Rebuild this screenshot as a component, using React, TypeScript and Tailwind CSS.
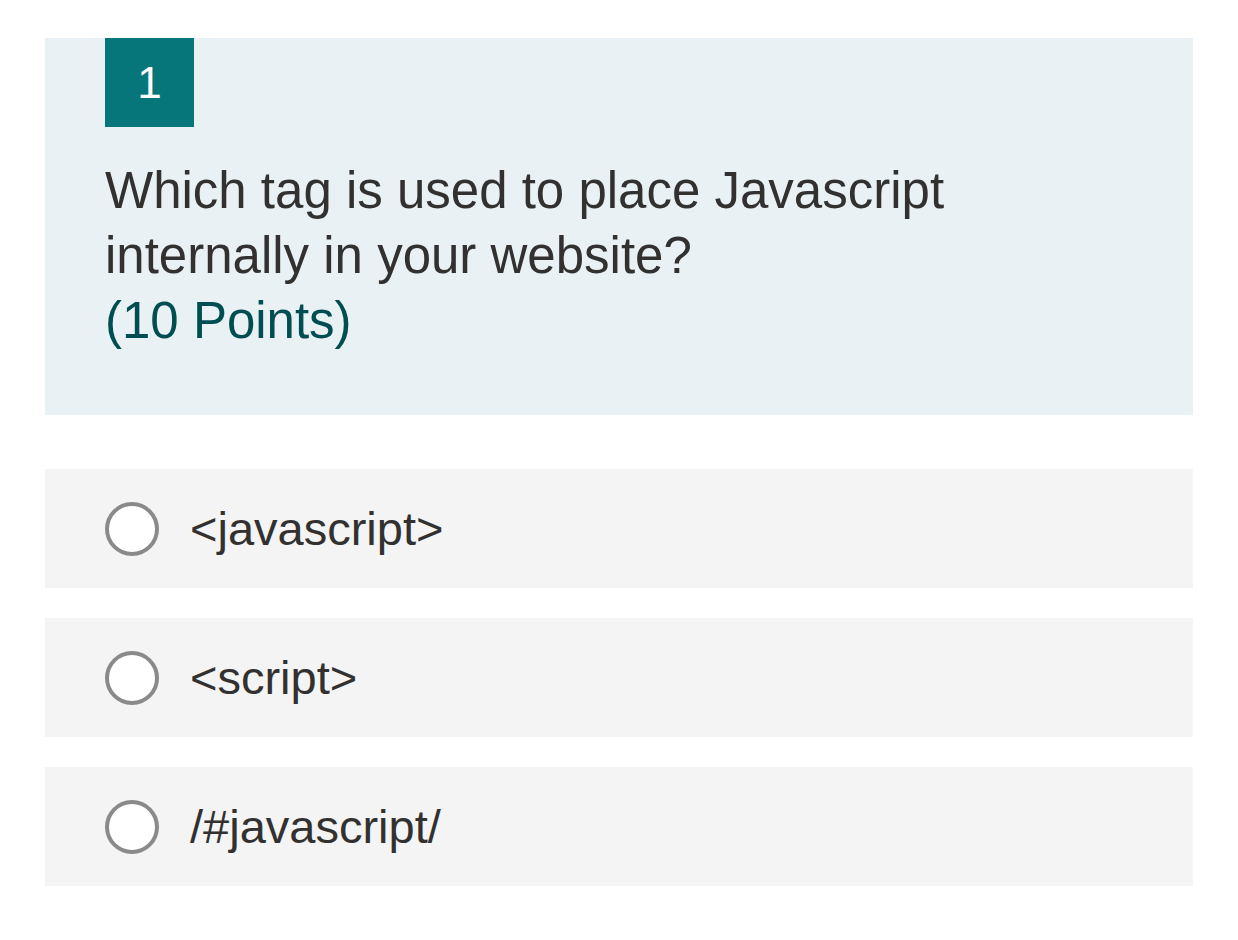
const options = ["<javascript>", "<script>", "/#javascript/"];

function Radio() {
  return <div className="w-[54px] h-[54px] shrink-0 rounded-full border-[4px] border-[#8a8a8a] bg-white" />;
}

export default function App() {
  return (
    <div className="min-h-screen w-full bg-white px-[45px] pt-[38px] font-['Liberation_Sans',Arial,sans-serif]">
      {/* Question card */}
      <div className="bg-[#e9f1f5] pl-[60px] pr-[60px] pb-[62px]">
        <div className="w-[89px] h-[89px] bg-[#06767a] flex items-center justify-center text-white text-[44px] leading-none">
          1
        </div>
        <div className="mt-[31px] text-[51px] leading-[65px] text-[#323130]">
          <div>Which tag is used to place Javascript</div>
          <div>internally in your website?</div>
          <div className="text-[#004e51]">(10 Points)</div>
        </div>
      </div>

      {/* Options */}
      <div className="mt-[54px] flex flex-col gap-[30px]">
        {options.map((opt) => (
          <div key={opt} className="h-[119px] bg-[#f4f4f4] pl-[60px] flex items-center gap-[31px]">
            <Radio />
            <span className="text-[47px] leading-none text-[#323130]">{opt}</span>
          </div>
        ))}
      </div>
    </div>
  );
}
